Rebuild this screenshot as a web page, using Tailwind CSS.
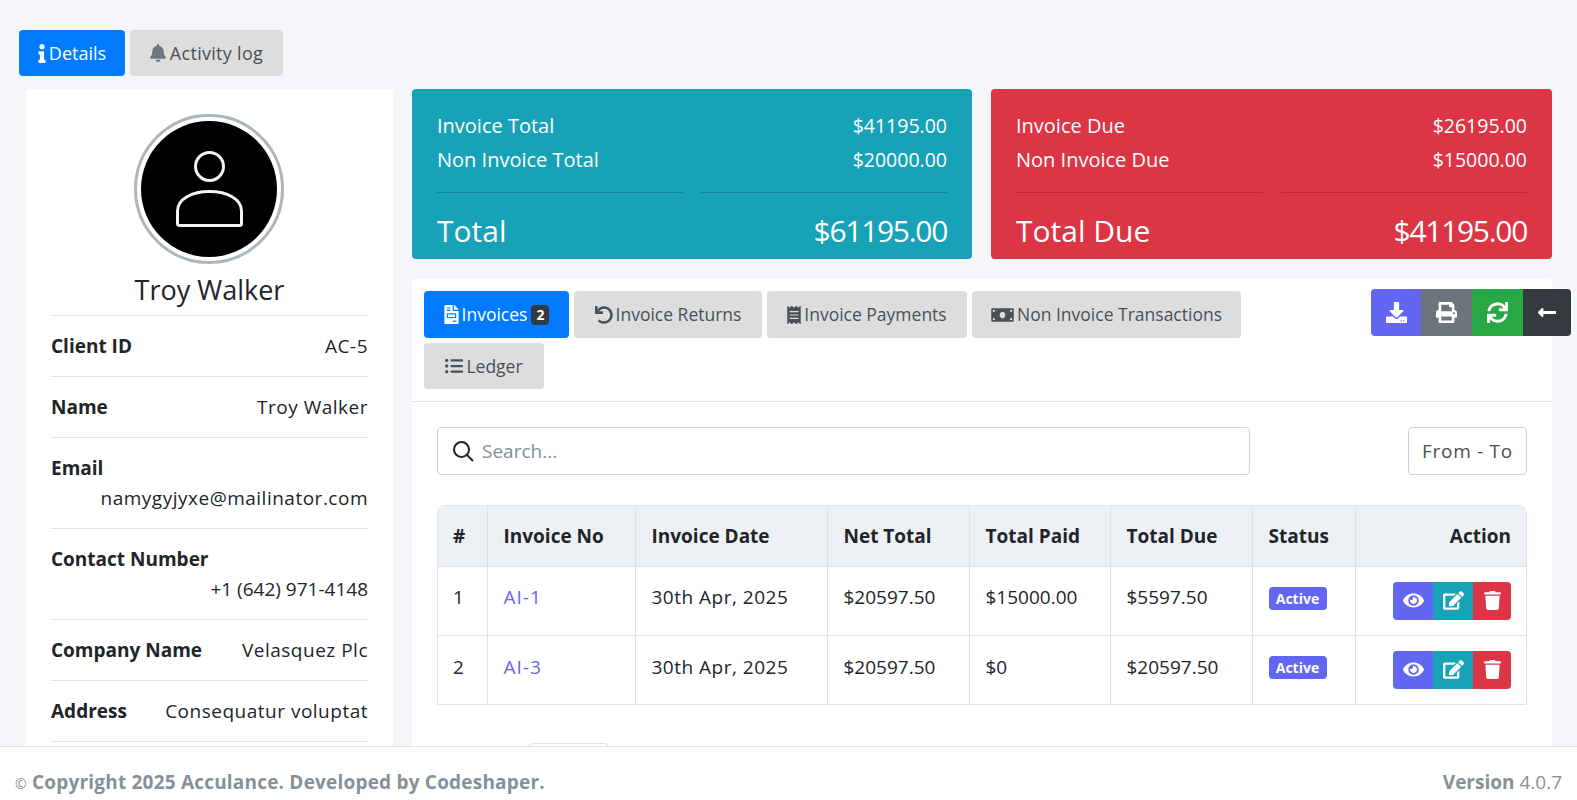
<!DOCTYPE html>
<html lang="en">

<head>
  <meta charset="UTF-8">
  <meta name="viewport" content="width=device-width, initial-scale=1.0">
  <title>Client details</title>
  <script src="https://cdn.jsdelivr.net/npm/@tailwindcss/browser@4"></script>
</head>

<body class="h-screen overflow-hidden flex flex-col bg-[#f4f6fa] text-[#212529] text-[19px] font-['Open_Sans',sans-serif]">
  <main class="flex-1 min-h-0 overflow-hidden pt-[30px] pl-[19px]">
    <!-- top tabs -->
    <div class="flex gap-[5px] h-[46px] text-[18px]">
      <button class="w-[106px] flex items-center justify-center gap-[3px] rounded bg-[#007bff] text-white">
        <svg class="h-[19px] w-[8px] fill-current" viewBox="0 0 192 512"><path d="M20 424.229h20V279.771H20c-11.046 0-20-8.954-20-20V212c0-11.046 8.954-20 20-20h112c11.046 0 20 8.954 20 20v212.229h20c11.046 0 20 8.954 20 20V492c0 11.046-8.954 20-20 20H20c-11.046 0-20-8.954-20-20v-47.771c0-11.046 8.954-20 20-20zM96 0C56.235 0 24 32.235 24 72s32.235 72 72 72 72-32.235 72-72S135.764 0 96 0z"/></svg>
        Details
      </button>
      <button class="w-[153px] flex items-center justify-center gap-[4px] rounded bg-[#dddddd] text-[#495057] tracking-[0.3px]">
        <svg class="h-[18px] w-[16px] fill-[#6c757d]" viewBox="0 0 448 512"><path d="M224 512c35.32 0 63.97-28.65 63.97-64H160.03c0 35.35 28.65 64 63.97 64zm215.39-149.71c-19.32-20.76-55.47-51.99-55.47-154.29 0-77.7-54.48-139.9-127.94-155.16V32c0-17.67-14.32-32-31.98-32s-31.98 14.33-31.98 32v20.84C118.56 68.1 64.08 130.3 64.08 208c0 102.3-36.15 133.53-55.47 154.29-6 6.45-8.66 14.16-8.61 21.71.11 16.4 12.98 32 32.1 32h383.8c19.12 0 32-15.6 32.1-32 .05-7.55-2.61-15.27-8.61-21.71z"/></svg>
        Activity log
      </button>
    </div>

    <div class="flex gap-[19px] mt-[13px] ml-[7px] items-start">
      <!-- client card -->
      <aside class="w-[367px] shrink-0 bg-white rounded px-[25px] pt-[25px] pb-[100px]">
        <div class="w-[150px] h-[150px] ml-[83px] rounded-full border-[3px] border-[#adb5bd] p-[4px]">
          <div class="w-full h-full rounded-full bg-black flex items-center justify-center">
            <svg class="w-[67px] h-[76px] fill-none stroke-[#f4f4f4] stroke-3" viewBox="0 0 67 76"><circle cx="33.500" cy="15.500" r="14"/><path d="M3.500 74.500c-1.500 0-2-.5-2-2V60C1.500 48 16 40.500 33.500 40.500S65.500 48 65.500 60v12.500c0 1.500-.5 2-2 2z"/></svg>
          </div>
        </div>
        <h2 class="text-center text-[27px] leading-[34px] mt-[9px] h-[43px] border-b border-[#dee2e6]">Troy Walker</h2>
        <div class="flex justify-between items-center h-[61px] border-b border-[#dee2e6]"><b class="font-bold">Client ID</b><span class="tracking-[0.5px]">AC-5</span></div>
        <div class="flex justify-between items-center h-[61px] border-b border-[#dee2e6]"><b class="font-bold">Name</b><span class="tracking-[0.5px]">Troy Walker</span></div>
        <div class="h-[91px] border-b border-[#dee2e6] pt-[18px]"><b class="block font-bold leading-[24px]">Email</b><p class="text-right leading-[36px] tracking-[0.5px]">namygyjyxe@mailinator.com</p></div>
        <div class="h-[91px] border-b border-[#dee2e6] pt-[18px]"><b class="block font-bold leading-[24px]">Contact Number</b><p class="text-right leading-[36px]">+1 (642) 971-4148</p></div>
        <div class="flex justify-between items-center h-[61px] border-b border-[#dee2e6]"><b class="font-bold">Company Name</b><span class="tracking-[0.5px]">Velasquez Plc</span></div>
        <div class="flex justify-between items-center h-[61px] border-b border-[#dee2e6]"><b class="font-bold">Address</b><span class="tracking-[0.5px]">Consequatur voluptat</span></div>
      </aside>

      <div class="w-[1140px] shrink-0">
        <!-- totals -->
        <div class="grid grid-cols-[560px_561px] gap-[19px]">
          <div class="h-[170px] rounded bg-[#17a2b8] text-white px-[25px] pt-[20px]">
            <div class="flex justify-between h-[34px] items-center text-[20px] font-medium"><span>Invoice Total</span><span class="text-[19.5px]">$41195.00</span></div>
            <div class="flex justify-between h-[34px] items-center text-[20px] font-medium"><span>Non Invoice Total</span><span class="text-[19.5px]">$20000.00</span></div>
            <div class="grid grid-cols-2 gap-[18px] mt-[15px]"><div class="h-px bg-[#138496]"></div><div class="h-px bg-[#138496]"></div></div>
            <div class="flex justify-between items-center h-[40px] mt-[17px] text-[30px] font-medium"><span>Total</span><span class="tracking-[-1.3px]">$61195.00</span></div>
          </div>
          <div class="h-[170px] rounded bg-[#dc3545] text-white px-[25px] pt-[20px]">
            <div class="flex justify-between h-[34px] items-center text-[20px] font-medium"><span>Invoice Due</span><span class="text-[19.5px]">$26195.00</span></div>
            <div class="flex justify-between h-[34px] items-center text-[20px] font-medium"><span>Non Invoice Due</span><span class="text-[19.5px]">$15000.00</span></div>
            <div class="grid grid-cols-2 gap-[18px] mt-[15px]"><div class="h-px bg-[#c82333]"></div><div class="h-px bg-[#c82333]"></div></div>
            <div class="flex justify-between items-center h-[40px] mt-[17px] text-[30px] font-medium"><span>Total Due</span><span class="tracking-[-1.3px]">$41195.00</span></div>
          </div>
        </div>

        <!-- invoices card -->
        <section class="mt-[20px] bg-white rounded-t">
          <div class="flex justify-between items-start h-[123px] border-b border-[#dee2e6] pt-[10px] pl-[12px]">
            <div class="flex flex-wrap gap-[5px] w-[900px] pt-[2px] text-[17.5px]">
              <button class="h-[47px] w-[145px] flex items-center justify-center gap-[3px] rounded bg-[#007bff] text-white">
                <svg class="h-[19px] w-[15px] fill-current" viewBox="0 0 384 512"><path d="M288 256H96v64h192v-64zm89-151L279.100 7c-4.500-4.500-10.600-7-17-7H256v128h128v-6.100c0-6.300-2.500-12.400-7-16.900zm-153 31V0H24C10.700 0 0 10.700 0 24v464c0 13.300 10.700 24 24 24h336c13.300 0 24-10.700 24-24V160H248c-13.200 0-24-10.800-24-24zM64 72c0-4.420 3.580-8 8-8h80c4.420 0 8 3.580 8 8v16c0 4.420-3.580 8-8 8H72c-4.420 0-8-3.580-8-8V72zm0 64c0-4.420 3.580-8 8-8h80c4.420 0 8 3.580 8 8v16c0 4.420-3.580 8-8 8H72c-4.420 0-8-3.580-8-8v-16zm256 304c0 4.420-3.580 8-8 8h-80c-4.420 0-8-3.580-8-8v-16c0-4.420 3.580-8 8-8h80c4.420 0 8 3.580 8 8v16zm0-200v96c0 8.840-7.160 16-16 16H80c-8.840 0-16-7.160-16-16v-96c0-8.840 7.160-16 16-16h224c8.840 0 16 7.160 16 16z"/></svg>
                Invoices
                <span class="ml-[1px] w-[18px] h-[20px] rounded bg-[#343a40] text-[14px] font-bold leading-[20px] text-center">2</span>
              </button>
              <button class="h-[47px] w-[188px] flex items-center justify-center gap-[3px] rounded bg-[#dddddd] text-[#495057]">
                <svg class="h-[18px] w-[18px] fill-current" viewBox="0 0 512 512"><path d="M212.333 224.333H12c-6.627 0-12-5.373-12-12V12C0 5.373 5.373 0 12 0h48c6.627 0 12 5.373 12 12v78.112C117.773 39.279 184.260 7.470 258.175 8.007c136.906.994 246.448 111.623 246.157 248.532C504.041 393.258 393.120 504 256.333 504c-64.089 0-122.496-24.313-166.510-64.215-5.099-4.622-5.334-12.554-.467-17.420l33.967-33.967c4.474-4.474 11.662-4.717 16.401-.525C170.760 415.336 211.580 432 256.333 432c97.268 0 176-78.716 176-176 0-97.267-78.716-176-176-176-58.496 0-110.280 28.476-142.274 72.333h98.274c6.627 0 12 5.373 12 12v48c0 6.627-5.373 12-12 12z"/></svg>
                Invoice Returns
              </button>
              <button class="h-[47px] w-[200px] flex items-center justify-center gap-[3px] rounded bg-[#dddddd] text-[#495057]">
                <svg class="h-[18px] w-[14px] fill-current" viewBox="0 0 384 512"><path d="M358.400 3.200L320 48 265.600 3.200a15.900 15.900 0 0 0-19.200 0L192 48 137.600 3.200a15.900 15.900 0 0 0-19.200 0L64 48 25.600 3.200C15-4.700 0 2.800 0 16v480c0 13.200 15 20.700 25.600 12.800L64 464l54.400 44.800a15.900 15.900 0 0 0 19.200 0L192 464l54.400 44.800a15.900 15.900 0 0 0 19.200 0L320 464l38.400 44.800c10.500 7.900 25.600.4 25.600-12.800V16c0-13.200-15-20.700-25.600-12.800zM320 360c0 4.400-3.600 8-8 8H72c-4.400 0-8-3.600-8-8v-16c0-4.400 3.600-8 8-8h240c4.400 0 8 3.600 8 8v16zm0-96c0 4.400-3.600 8-8 8H72c-4.400 0-8-3.600-8-8v-16c0-4.400 3.600-8 8-8h240c4.400 0 8 3.600 8 8v16zm0-96c0 4.400-3.600 8-8 8H72c-4.400 0-8-3.600-8-8v-16c0-4.400 3.600-8 8-8h240c4.400 0 8 3.600 8 8v16z"/></svg>
                Invoice Payments
              </button>
              <button class="h-[47px] w-[269px] flex items-center justify-center gap-[3px] rounded bg-[#dddddd] text-[#495057]">
                <svg class="h-[18px] w-[23px] fill-current" viewBox="0 0 640 512"><path d="M608 64H32C14.330 64 0 78.330 0 96v320c0 17.670 14.330 32 32 32h576c17.670 0 32-14.330 32-32V96c0-17.670-14.330-32-32-32zM48 400v-64c35.350 0 64 28.650 64 64H48zm0-224v-64h64c0 35.350-28.650 64-64 64zm272 176c-44.190 0-80-42.990-80-96 0-53.020 35.820-96 80-96s80 42.980 80 96c0 53.030-35.830 96-80 96zm272 48h-64c0-35.350 28.650-64 64-64v64zm0-224c-35.350 0-64-28.650-64-64h64v64z"/></svg>
                Non Invoice Transactions
              </button>
              <button class="h-[46px] w-[120px] flex items-center justify-center gap-[3px] rounded bg-[#dddddd] text-[#495057]">
                <svg class="h-[18px] w-[18px] fill-current" viewBox="0 0 512 512"><circle cx="48" cy="96" r="48"/><circle cx="48" cy="256" r="48"/><circle cx="48" cy="416" r="48"/><path d="M176 64h320a16 16 0 0 1 16 16v32a16 16 0 0 1-16 16H176a16 16 0 0 1-16-16V80a16 16 0 0 1 16-16zm0 160h320a16 16 0 0 1 16 16v32a16 16 0 0 1-16 16H176a16 16 0 0 1-16-16v-32a16 16 0 0 1 16-16zm0 160h320a16 16 0 0 1 16 16v32a16 16 0 0 1-16 16H176a16 16 0 0 1-16-16v-32a16 16 0 0 1 16-16z"/></svg>
                Ledger
              </button>
            </div>
            <!-- action group hangs past the card edge -->
            <div class="flex h-[47px] shrink-0 -mr-[19px] text-white">
              <button class="w-[50px] flex items-center justify-center rounded-l bg-[#6366f1]">
                <svg class="h-[21px] w-[21px] fill-current" viewBox="0 0 512 512"><path d="M216 0h80c13.300 0 24 10.700 24 24v168h87.700c17.800 0 26.700 21.500 14.100 34.100L269.700 378.300c-7.500 7.500-19.800 7.500-27.300 0L90.100 226.100c-12.600-12.600-3.700-34.100 14.100-34.100H192V24c0-13.300 10.700-24 24-24zm296 376v112c0 13.300-10.700 24-24 24H24c-13.300 0-24-10.700-24-24V376c0-13.300 10.700-24 24-24h146.700l49 49c20.100 20.100 52.500 20.100 72.600 0l49-49H488c13.300 0 24 10.700 24 24zm-124 88c0-11-9-20-20-20s-20 9-20 20 9 20 20 20 20-9 20-20zm64 0c0-11-9-20-20-20s-20 9-20 20 9 20 20 20 20-9 20-20z"/></svg>
              </button>
              <button class="w-[51px] flex items-center justify-center bg-[#6c757d]">
                <svg class="h-[21px] w-[21px] fill-current" viewBox="0 0 512 512"><path d="M448 192V77.250c0-8.490-3.370-16.620-9.370-22.630L393.370 9.370c-6-6-14.140-9.370-22.630-9.370H96C78.330 0 64 14.330 64 32v160c-35.350 0-64 28.650-64 64v112c0 8.840 7.160 16 16 16h48v96c0 17.670 14.330 32 32 32h320c17.670 0 32-14.330 32-32v-96h48c8.840 0 16-7.160 16-16V256c0-35.350-28.650-64-64-64zm-64 256H128v-96h256v96zm0-224H128V64h192v48c0 8.840 7.160 16 16 16h48v96zm48 72c-13.250 0-24-10.750-24-24 0-13.260 10.750-24 24-24s24 10.740 24 24c0 13.250-10.750 24-24 24z"/></svg>
              </button>
              <button class="w-[51px] flex items-center justify-center bg-[#28a745]">
                <svg class="h-[21px] w-[21px] fill-current" viewBox="0 0 512 512"><path d="M440.650 12.570l4 82.770A247.160 247.160 0 0 0 255.830 8C134.730 8 33.910 94.920 12.290 209.820A12 12 0 0 0 24.090 224h49.050a12 12 0 0 0 11.670-9.260 175.910 175.910 0 0 1 317-56.940l-101.460-4.860a12 12 0 0 0-12.570 12v47.410a12 12 0 0 0 12 12H500a12 12 0 0 0 12-12V12a12 12 0 0 0-12-12h-47.370a12 12 0 0 0-11.980 12.570zM255.830 432a175.610 175.610 0 0 1-146-77.800l101.800 4.870a12 12 0 0 0 12.570-12v-47.400a12 12 0 0 0-12-12H12a12 12 0 0 0-12 12V500a12 12 0 0 0 12 12h47.350a12 12 0 0 0 12-12.600l-4.150-82.570A247.170 247.170 0 0 0 255.830 504c121.110 0 221.930-86.920 243.550-201.820a12 12 0 0 0-11.800-14.180h-49.050a12 12 0 0 0-11.670 9.260A175.860 175.860 0 0 1 255.830 432z"/></svg>
              </button>
              <button class="w-[48px] flex items-center justify-center rounded-r bg-[#343a40]">
                <svg class="h-[21px] w-[18px] fill-current" viewBox="0 0 448 512"><path d="M134.059 296H436c6.627 0 12-5.373 12-12v-56c0-6.627-5.373-12-12-12H134.059v-46.059c0-21.382-25.851-32.090-40.971-16.971L7.029 239.029c-9.373 9.373-9.373 24.569 0 33.941l86.059 86.059c15.119 15.119 40.971 4.411 40.971-16.971V296z"/></svg>
              </button>
            </div>
          </div>

          <div class="px-[25px] pt-[25px]">
            <div class="flex justify-between">
              <div class="w-[813px] h-[48px] flex items-center gap-[8px] border border-[#ced4da] rounded px-[14px]">
                <svg class="w-[22px] h-[22px] fill-none stroke-[#212529] stroke-2" viewBox="0 0 22 22"><circle cx="9.500" cy="9.500" r="7.500"/><path d="M15 15l6 6"/></svg>
                <span class="text-[#868e96]">Search...</span>
              </div>
              <div class="w-[119px] h-[48px] flex items-center justify-center border border-[#ced4da] rounded text-[#495057] tracking-[0.7px]">From - To</div>
            </div>

            <div class="mt-[30px] rounded-t-lg border border-[#dee2e6] overflow-hidden">
              <table class="w-full table-fixed border-collapse">
                <thead class="bg-[#edf1f5] font-bold">
                  <tr class="h-[60px] border-b border-[#dee2e6]">
                    <th class="w-[49px] pl-[15px] pt-[1px] text-left">#</th>
                    <th class="w-[148px] pl-[16px] pt-[1px] text-left border-l border-[#dee2e6]">Invoice No</th>
                    <th class="w-[192px] pl-[16px] pt-[1px] text-left border-l border-[#dee2e6]">Invoice Date</th>
                    <th class="w-[142px] pl-[16px] pt-[1px] text-left border-l border-[#dee2e6]">Net Total</th>
                    <th class="w-[141px] pl-[16px] pt-[1px] text-left border-l border-[#dee2e6]">Total Paid</th>
                    <th class="w-[142px] pl-[16px] pt-[1px] text-left border-l border-[#dee2e6]">Total Due</th>
                    <th class="w-[103px] pl-[16px] pt-[1px] text-left border-l border-[#dee2e6]">Status</th>
                    <th class="pr-[15px] pt-[1px] text-right border-l border-[#dee2e6]">Action</th>
                  </tr>
                </thead>
                <tbody>
                  <tr class="h-[69px] border-b border-[#dee2e6]">
                    <td class="pl-[15px] pb-[6px]">1</td>
                    <td class="pl-[16px] pb-[6px] border-l border-[#dee2e6] text-[#6366f1] tracking-[1px]">AI-1</td>
                    <td class="pl-[16px] pb-[6px] border-l border-[#dee2e6] tracking-[0.5px]">30th Apr, 2025</td>
                    <td class="pl-[16px] pb-[6px] border-l border-[#dee2e6]">$20597.50</td>
                    <td class="pl-[16px] pb-[6px] border-l border-[#dee2e6]">$15000.00</td>
                    <td class="pl-[16px] pb-[6px] border-l border-[#dee2e6]">$5597.50</td>
                    <td class="pl-[16px] pb-[4px] border-l border-[#dee2e6]"><span class="block w-[58px] h-[23px] rounded bg-[#6366f1] text-white text-[14px] font-bold leading-[23px] text-center">Active</span></td>
                    <td class="pr-[15px] border-l border-[#dee2e6]">
                      <div class="flex justify-end text-white">
                        <span class="w-[40px] h-[38px] flex items-center justify-center rounded-l bg-[#6366f1]"><svg class="w-[21px] h-[19px] fill-current" viewBox="0 0 576 512"><path d="M572.520 241.400C518.290 135.590 410.930 64 288 64S57.680 135.640 3.480 241.410a32.350 32.350 0 0 0 0 29.190C57.710 376.410 165.070 448 288 448s230.320-71.640 284.520-177.410a32.350 32.350 0 0 0 0-29.190zM288 400a144 144 0 1 1 144-144 143.930 143.930 0 0 1-144 144zm0-240a95.310 95.310 0 0 0-25.310 3.790 47.850 47.850 0 0 1-66.900 66.900A95.780 95.780 0 1 0 288 160z"/></svg></span>
                        <span class="w-[40px] h-[38px] flex items-center justify-center bg-[#17a2b8]"><svg class="w-[21px] h-[19px] fill-current" viewBox="0 0 576 512"><path d="M402.600 83.200l90.200 90.200c3.800 3.800 3.800 10 0 13.800L274.400 405.600l-92.800 10.300c-12.400 1.400-22.900-9.100-21.500-21.500l10.300-92.800L388.800 83.200c3.800-3.800 10-3.800 13.800 0zm162-22.900l-48.800-48.800c-15.200-15.200-39.900-15.200-55.200 0l-35.400 35.400c-3.800 3.800-3.800 10 0 13.800l90.200 90.200c3.800 3.800 10 3.800 13.800 0l35.400-35.400c15.200-15.300 15.200-40 0-55.200zM384 346.200V448H64V128h229.800c3.200 0 6.200-1.300 8.500-3.500l40-40c7.600-7.600 2.200-20.500-8.500-20.500H48C21.500 64 0 85.500 0 112v352c0 26.500 21.500 48 48 48h352c26.500 0 48-21.500 48-48V306.200c0-10.700-12.900-16-20.500-8.500l-40 40c-2.200 2.300-3.500 5.300-3.500 8.500z"/></svg></span>
                        <span class="w-[38px] h-[38px] flex items-center justify-center rounded-r bg-[#dc3545]"><svg class="w-[17px] h-[19px] fill-current" viewBox="0 0 448 512"><path d="M432 32H312l-9.400-18.700A24 24 0 0 0 281.100 0H166.800a23.720 23.720 0 0 0-21.400 13.300L136 32H16A16 16 0 0 0 0 48v32a16 16 0 0 0 16 16h416a16 16 0 0 0 16-16V48a16 16 0 0 0-16-16zM53.200 467a48 48 0 0 0 47.900 45h245.800a48 48 0 0 0 47.900-45L416 128H32z"/></svg></span>
                      </div>
                    </td>
                  </tr>
                  <tr class="h-[69px]">
                    <td class="pl-[15px] pb-[6px]">2</td>
                    <td class="pl-[16px] pb-[6px] border-l border-[#dee2e6] text-[#6366f1] tracking-[1px]">AI-3</td>
                    <td class="pl-[16px] pb-[6px] border-l border-[#dee2e6] tracking-[0.5px]">30th Apr, 2025</td>
                    <td class="pl-[16px] pb-[6px] border-l border-[#dee2e6]">$20597.50</td>
                    <td class="pl-[16px] pb-[6px] border-l border-[#dee2e6]">$0</td>
                    <td class="pl-[16px] pb-[6px] border-l border-[#dee2e6]">$20597.50</td>
                    <td class="pl-[16px] pb-[4px] border-l border-[#dee2e6]"><span class="block w-[58px] h-[23px] rounded bg-[#6366f1] text-white text-[14px] font-bold leading-[23px] text-center">Active</span></td>
                    <td class="pr-[15px] border-l border-[#dee2e6]">
                      <div class="flex justify-end text-white">
                        <span class="w-[40px] h-[38px] flex items-center justify-center rounded-l bg-[#6366f1]"><svg class="w-[21px] h-[19px] fill-current" viewBox="0 0 576 512"><path d="M572.520 241.400C518.290 135.590 410.930 64 288 64S57.680 135.640 3.480 241.410a32.350 32.350 0 0 0 0 29.190C57.710 376.410 165.070 448 288 448s230.320-71.640 284.520-177.410a32.350 32.350 0 0 0 0-29.190zM288 400a144 144 0 1 1 144-144 143.930 143.930 0 0 1-144 144zm0-240a95.310 95.310 0 0 0-25.310 3.790 47.850 47.850 0 0 1-66.900 66.900A95.780 95.780 0 1 0 288 160z"/></svg></span>
                        <span class="w-[40px] h-[38px] flex items-center justify-center bg-[#17a2b8]"><svg class="w-[21px] h-[19px] fill-current" viewBox="0 0 576 512"><path d="M402.600 83.200l90.200 90.200c3.800 3.800 3.800 10 0 13.800L274.400 405.600l-92.800 10.300c-12.400 1.400-22.900-9.100-21.500-21.500l10.300-92.800L388.800 83.200c3.800-3.800 10-3.800 13.800 0zm162-22.900l-48.800-48.800c-15.200-15.200-39.900-15.200-55.200 0l-35.400 35.400c-3.800 3.800-3.800 10 0 13.800l90.200 90.200c3.800 3.800 10 3.800 13.800 0l35.400-35.400c15.200-15.300 15.200-40 0-55.200zM384 346.200V448H64V128h229.800c3.200 0 6.200-1.300 8.500-3.500l40-40c7.600-7.600 2.200-20.500-8.500-20.500H48C21.500 64 0 85.500 0 112v352c0 26.500 21.500 48 48 48h352c26.500 0 48-21.500 48-48V306.200c0-10.700-12.900-16-20.500-8.500l-40 40c-2.200 2.300-3.500 5.300-3.500 8.500z"/></svg></span>
                        <span class="w-[38px] h-[38px] flex items-center justify-center rounded-r bg-[#dc3545]"><svg class="w-[17px] h-[19px] fill-current" viewBox="0 0 448 512"><path d="M432 32H312l-9.400-18.700A24 24 0 0 0 281.100 0H166.800a23.720 23.720 0 0 0-21.400 13.300L136 32H16A16 16 0 0 0 0 48v32a16 16 0 0 0 16 16h416a16 16 0 0 0 16-16V48a16 16 0 0 0-16-16zM53.200 467a48 48 0 0 0 47.900 45h245.800a48 48 0 0 0 47.900-45L416 128H32z"/></svg></span>
                      </div>
                    </td>
                  </tr>
                </tbody>
              </table>
            </div>
            <!-- top of the pager, cut off by the footer -->
            <div class="mt-[38px] ml-[92px] w-[80px] h-[40px] rounded border border-[#dee2e6]"></div>
            <div class="h-[200px]"></div>
          </div>
        </section>
      </div>
    </div>
  </main>

  <footer class="h-[54px] shrink-0 flex items-end justify-between pb-[4px] bg-white border-t border-[#dee2e6] px-[15px] text-[#869099] font-bold">
    <p class="tracking-[0.2px]"><span class="text-[14px] font-normal">©</span> Copyright 2025 Acculance. Developed by Codeshaper.</p>
    <p>Version <span class="font-normal">4.0.7</span></p>
  </footer>
</body>

</html>
